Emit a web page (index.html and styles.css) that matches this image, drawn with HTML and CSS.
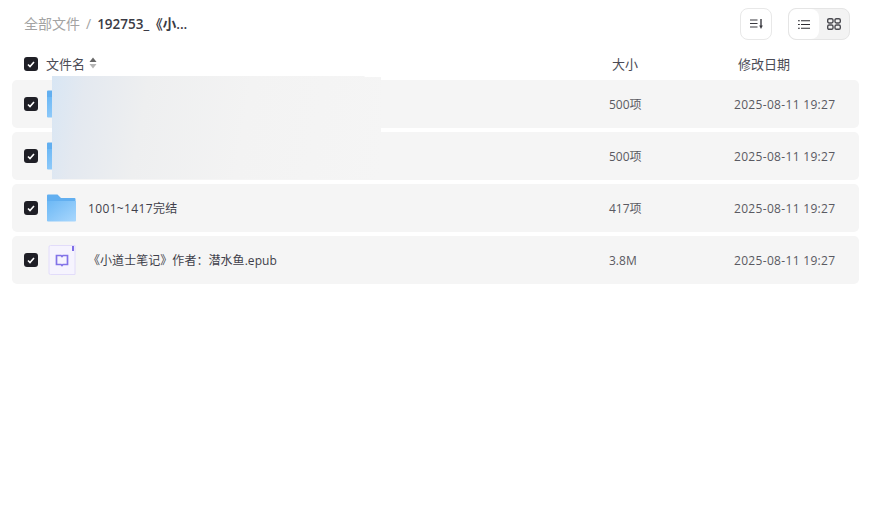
FILE: index.html
```html
<!doctype html>
<html>
<head>
<meta charset="UTF-8">
<title>全部文件</title>
<link rel="stylesheet" href="styles.css">
</head>

<body>
<div class="page">
  <div class="toolbar">
    <div class="crumbs">
      <span class="crumb-root">全部文件</span>
      <span class="crumb-sep">/</span>
      <span class="crumb-now">192753_《小...</span>
    </div>
    <div class="tools">
      <div class="tool-btn">
        <svg width="13" height="10" viewBox="0 0 13 10"><path d="M0 1h7.500M0 4.500h7.500M0 8h7.500" stroke="#3a3a40" stroke-width="1.200" fill="none"/><path d="M11 0v7" stroke="#3a3a40" stroke-width="1.400"/><path d="M9.200 6.500h3.600L11 10z" fill="#3a3a40"/></svg>
      </div>
      <div class="view-switch">
        <div class="view-btn view-on">
          <svg width="12" height="9" viewBox="0 0 12 9"><path d="M3 0.700h9M3 4.500h9M3 8.300h9" stroke="#2c2c32" stroke-width="1.100" fill="none"/><path d="M0 0.700h1.800M0 4.500h1.800M0 8.300h1.800" stroke="#2c2c32" stroke-width="1.100" fill="none"/></svg>
        </div>
        <div class="view-btn">
          <svg width="14" height="12" viewBox="0 0 14 12"><g fill="none" stroke="#4a4a50" stroke-width="1.400"><rect x="0.700" y="0.700" width="5.300" height="4.300" rx="1.400"/><rect x="8" y="0.700" width="5.300" height="4.300" rx="1.400"/><rect x="0.700" y="7" width="5.300" height="4.300" rx="1.400"/><rect x="8" y="7" width="5.300" height="4.300" rx="1.400"/></g></svg>
        </div>
      </div>
    </div>
  </div>

  <div class="list-head">
    <span class="check"><svg width="8" height="7" viewBox="0 0 8 7"><path d="M1 3.500l2 2 4-4.500" stroke="#fff" stroke-width="1.600" fill="none"/></svg></span>
    <span class="head-name head-text">文件名
      <svg class="sort" width="8" height="12" viewBox="0 0 8 12"><path d="M4 0.500L7.500 5h-7z" fill="#666"/><path d="M4 11.500L7.500 7h-7z" fill="#b5b5b5"/></svg>
    </span>
    <span class="head-size head-text">大小</span>
    <span class="head-date head-text">修改日期</span>
  </div>

  <div class="list">
    <div class="row">
      <span class="check"><svg width="8" height="7" viewBox="0 0 8 7"><path d="M1 3.500l2 2 4-4.500" stroke="#fff" stroke-width="1.600" fill="none"/></svg></span>
      <svg class="folder" width="30" height="28" viewBox="0 0 30 28"><use href="#folder-shape"/></svg>
      <span class="name"></span>
      <span class="size">500项</span>
      <span class="date">2025-08-11 19:27</span>
    </div>
    <div class="row">
      <span class="check"><svg width="8" height="7" viewBox="0 0 8 7"><path d="M1 3.500l2 2 4-4.500" stroke="#fff" stroke-width="1.600" fill="none"/></svg></span>
      <svg class="folder" width="30" height="28" viewBox="0 0 30 28"><use href="#folder-shape"/></svg>
      <span class="name"></span>
      <span class="size">500项</span>
      <span class="date">2025-08-11 19:27</span>
    </div>
    <div class="row">
      <span class="check"><svg width="8" height="7" viewBox="0 0 8 7"><path d="M1 3.500l2 2 4-4.500" stroke="#fff" stroke-width="1.600" fill="none"/></svg></span>
      <svg class="folder" width="30" height="28" viewBox="0 0 30 28"><use href="#folder-shape"/></svg>
      <span class="name name-num">1001~1417完结</span>
      <span class="size">417项</span>
      <span class="date">2025-08-11 19:27</span>
    </div>
    <div class="row">
      <span class="check"><svg width="8" height="7" viewBox="0 0 8 7"><path d="M1 3.500l2 2 4-4.500" stroke="#fff" stroke-width="1.600" fill="none"/></svg></span>
      <svg class="epub" width="30" height="32" viewBox="0 0 30 32">
        <path d="M3.500 1.500h24.500v29h-24.500a1.500 1.500 0 0 1-1.500-1.500v-26a1.500 1.500 0 0 1 1.500-1.500z" fill="#f6f4fe" stroke="#e2dcfa"/>
        <rect x="25" y="2" width="2" height="5" fill="#7d6ee6"/>
        <path d="M9.500 11.500h4.500l1 1 1-1h4.500v9h-4.500l-1 1-1-1h-4.500z" fill="none" stroke="#8273e8" stroke-width="1.700"/>
      </svg>
      <span class="name name-file">《小道士笔记》作者：潜水鱼.epub</span>
      <span class="size">3.8M</span>
      <span class="date">2025-08-11 19:27</span>
    </div>
  </div>

  <div class="blur-patch"></div>
</div>

<svg class="defs" width="0" height="0">
  <defs>
    <linearGradient id="folder-grad" x1="0" y1="0" x2="1" y2="1">
      <stop offset="0" stop-color="#6cb8f5"/>
      <stop offset="1" stop-color="#a9d7fd"/>
    </linearGradient>
    <symbol id="folder-shape" viewBox="0 0 30 28">
      <path d="M1 1.500a1 1 0 0 1 1-1h9.500l3.500 3.500h13.500a1 1 0 0 1 1 1v21a1 1 0 0 1-1 1h-26.500a1 1 0 0 1-1-1z" fill="#62aff0"/>
      <path d="M1 7h29v19.500a1 1 0 0 1-1 1h-27a1 1 0 0 1-1-1z" fill="url(#folder-grad)"/>
    </symbol>
  </defs>
</svg>
</body>
</html>
```

FILE: styles.css
```css
body{margin:0; padding:0; background-color:#ffffff; font-family:"Open Sans", "Noto Sans CJK SC", sans-serif; font-size:12px; color:#4b4b55;}
.page{position:relative; width:874px; height:514px; overflow:hidden;}
.defs{position:absolute;}

.toolbar{display:flex; align-items:center; justify-content:space-between; height:32px; padding:8px 24px 0 24px;}
.crumbs{display:flex; align-items:center; gap:6px; font-size:14px; line-height:20px;}
.crumb-root{color:#a3a3a3;}
.crumb-sep{color:#a3a3a3;}
.crumb-now{color:#3a3a44; font-size:13.5px; font-weight:600;}
.tools{display:flex; gap:16px;}
.tool-btn{display:flex; align-items:center; justify-content:center; width:30px; height:30px; border:1px solid #e8e8e8; border-radius:8px;}
.view-switch{display:flex; width:60px; height:30px; border:1px solid #e5e5e5; border-radius:8px; background-color:#f3f3f3; overflow:hidden;}
.view-btn{display:flex; align-items:center; justify-content:center; width:30px;}
.view-on{background-color:#ffffff; border-radius:8px;}

.list-head{display:flex; align-items:center; height:24px; padding:12px 0 4px 24px; font-size:13px;}
.head-text{margin-top:-2px;}
.head-name{display:flex; align-items:center; gap:4px; margin-left:8px; width:566px;}
.head-size{width:126px;}
.head-date{width:60px;}
.sort{display:block;}

.check{display:flex; align-items:center; justify-content:center; flex:none; width:14px; height:14px; background-color:#1f1f26; border-radius:3px;}

.list{display:flex; flex-direction:column; gap:4px; margin:0 15px 0 12px;}
.row{display:flex; align-items:center; height:48px; padding-left:12px; background-color:#f5f5f5; border-radius:5px;}
.folder{flex:none; margin-left:8px;}
.epub{flex:none; margin-left:9px;}
.name{flex:none; width:521px; margin-left:12px; color:#3f3f4a;}
.name-num{letter-spacing:0.35px;}
.name-file{margin-left:11px; letter-spacing:0.05px;}
.size{width:125px; color:#5a5a62;}
.date{color:#5a5a62; letter-spacing:0.32px;}

.blur-patch{position:absolute; left:52px; top:76px; width:329px; height:103px; background:linear-gradient(100deg, #d8e6f4 0%, #e4e9f0 10%, #eeeff0 28%, #f3f3f3 58%, #f5f5f5 100%); clip-path:polygon(0 0, 95% 0, 95% 1px, 100% 1px, 100% 100%, 0 100%);}
```
